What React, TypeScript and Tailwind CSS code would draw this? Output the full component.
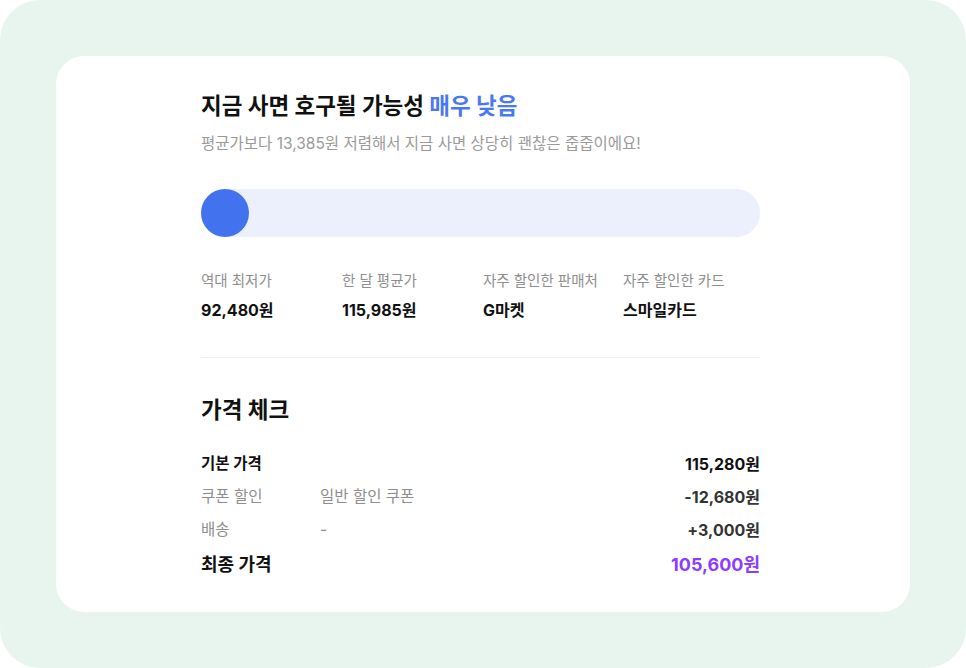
const stats = [
  { label: "역대 최저가", value: "92,480원" },
  { label: "한 달 평균가", value: "115,985원" },
  { label: "자주 할인한 판매처", value: "G마켓" },
  { label: "자주 할인한 카드", value: "스마일카드" },
];

const App = () => {
  return (
    <div
      className="w-[966px] h-[668px] bg-white"
      style={{ fontFamily: '"Inter", "Noto Sans CJK KR", sans-serif' }}
    >
      <div className="w-full h-full rounded-[40px] bg-[#e8f5ee] p-[56px]">
        <div className="w-full h-full rounded-[28px] bg-white">
          <div className="w-[559px] ml-[145px] pt-[34px]">
            <h1 className="text-[22.5px] leading-[32px] font-bold text-[#111]">
              지금 사면 호구될 가능성 <span className="text-[#4a78f0]">매우 낮음</span>
            </h1>
            <p className="mt-[12px] text-[15.5px] leading-[20px] text-[#9a9a9a]">
              평균가보다 13,385원 저렴해서 지금 사면 상당히 괜찮은 줍줍이에요!
            </p>

            <div className="mt-[35px] h-[48px] rounded-full bg-[#ecf0fc]">
              <div className="w-[48px] h-[48px] rounded-full bg-[#4372ee]" />
            </div>

            <div className="mt-[34px] grid grid-cols-[141px_141px_140px_1fr] pb-[36px] border-b border-[#eeeeee]">
              {stats.map((s) => (
                <div key={s.label} className="flex flex-col">
                  <span className="text-[14.5px] leading-[20px] text-[#8e8e8e]">{s.label}</span>
                  <span className="mt-[8px] text-[16px] leading-[22px] font-bold text-[#111]">
                    {s.value}
                  </span>
                </div>
              ))}
            </div>

            <h2 className="mt-[36px] text-[22.5px] leading-[32px] font-bold text-[#111]">가격 체크</h2>

            <div className="mt-[21px] flex flex-col">
              <div className="flex items-center h-[33px]">
                <span className="text-[15.5px] font-bold text-[#111]">기본 가격</span>
                <span className="ml-auto text-[16px] font-bold text-[#111]">115,280원</span>
              </div>
              <div className="flex items-center h-[33px]">
                <span className="w-[119px] text-[15.5px] text-[#8e8e8e]">쿠폰 할인</span>
                <span className="text-[15.5px] text-[#8e8e8e]">일반 할인 쿠폰</span>
                <span className="ml-auto text-[16px] font-bold text-[#333]">-12,680원</span>
              </div>
              <div className="flex items-center h-[33px]">
                <span className="w-[119px] text-[15.5px] text-[#8e8e8e]">배송</span>
                <span className="text-[15.5px] text-[#8e8e8e]">-</span>
                <span className="ml-auto text-[16px] font-bold text-[#333]">+3,000원</span>
              </div>
              <div className="flex items-center h-[37px]">
                <span className="text-[18px] font-bold text-[#111]">최종 가격</span>
                <span className="ml-auto text-[18px] font-bold text-[#8b3dff]">105,600원</span>
              </div>
            </div>
          </div>
        </div>
      </div>
    </div>
  );
};

export default App;
